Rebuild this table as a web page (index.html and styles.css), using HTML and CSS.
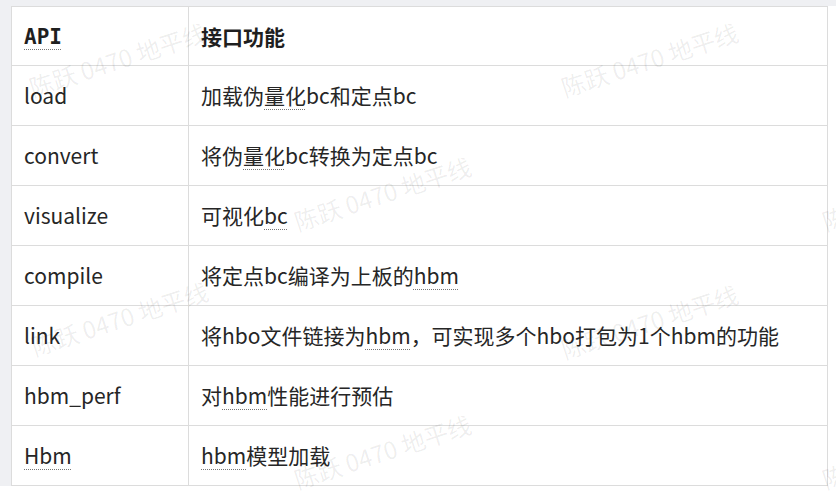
FILE: index.html
```html
<!DOCTYPE html>
<html lang="zh-CN">
<head>
  <meta charset="UTF-8">
  <meta name="viewport" content="width=device-width, initial-scale=1.0">
  <title>API 接口功能</title>
  <link rel="stylesheet" href="styles.css">
</head>
<body>
  <div class="top-band"></div>
  <div class="page">
    <div class="side-band"></div>
    <table class="api-table">
      <thead>
        <tr>
          <th class="col-api"><span class="mark mono">API</span></th>
          <th>接口功能</th>
        </tr>
      </thead>
      <tbody>
        <tr>
          <td>load</td>
          <td>加载伪<span class="mark">量化</span>bc和定点bc</td>
        </tr>
        <tr>
          <td>convert</td>
          <td>将伪<span class="mark">量化</span>bc转换为定点bc</td>
        </tr>
        <tr>
          <td>visualize</td>
          <td>可视化<span class="mark">bc</span></td>
        </tr>
        <tr>
          <td>compile</td>
          <td>将定点bc编译为上板的<span class="mark">hbm</span></td>
        </tr>
        <tr>
          <td>link</td>
          <td>将hbo文件链接为<span class="mark">hbm</span>，可实现多个hbo打包为1个hbm的功能</td>
        </tr>
        <tr>
          <td>hbm_perf</td>
          <td>对<span class="mark">hbm</span>性能进行预估</td>
        </tr>
        <tr>
          <td><span class="mark">Hbm</span></td>
          <td><span class="mark">hbm</span>模型加载</td>
        </tr>
      </tbody>
    </table>
  </div>

  <!-- 水印 -->
  <div class="watermarks">
    <span class="wm" style="left: 30px; top: 76px;">陈跃 0470 地平线</span>
    <span class="wm" style="left: 562px; top: 76px;">陈跃 0470 地平线</span>
    <span class="wm" style="left: 295px; top: 210px;">陈跃 0470 地平线</span>
    <span class="wm" style="left: 823px; top: 210px;">陈跃 0470 地平线</span>
    <span class="wm" style="left: 32px; top: 335px;">陈跃 0470 地平线</span>
    <span class="wm" style="left: 562px; top: 338px;">陈跃 0470 地平线</span>
    <span class="wm" style="left: 295px; top: 468px;">陈跃 0470 地平线</span>
    <span class="wm" style="left: 823px; top: 468px;">陈跃 0470 地平线</span>
  </div>
</body>
</html>
```

FILE: styles.css
```css
body {
  margin: 0;
  background-color: #fff;
  font-family: "Noto Sans CJK SC", "Noto Sans", sans-serif;
  color: #262626;
  position: relative;
  height: 501px;
  overflow: hidden;
}

.top-band {
  height: 6px;
  background-color: #eff0f3;
}

.page {
  display: flex;
  align-items: flex-start;
}

.side-band {
  width: 11px;
  height: 480px;
  background-color: #eff0f3;
}

.api-table {
  width: 817px;
  border-collapse: collapse;
  font-size: 21px;
  background-color: #fff;
}

.api-table th,
.api-table td {
  height: 59px;
  padding: 0 12px;
  border: 1px solid #dcdcdc;
  text-align: left;
  font-weight: normal;
  line-height: 1;
}

.api-table thead th {
  height: 58px;
  font-weight: bold;
  color: #1f1f1f;
}

.col-api {
  width: 152px;
}

.mono {
  font-family: "DejaVu Sans Mono", monospace;
}

/* 虚线下划线 */
.mark {
  text-decoration: underline dotted #777;
  text-underline-offset: 5px;
  text-decoration-thickness: 1px;
}

/* 水印 */
.watermarks {
  position: absolute;
  inset: 0;
  pointer-events: none;
}

.wm {
  position: absolute;
  font-size: 24px;
  line-height: 1;
  color: rgba(0, 0, 0, 0.07);
  white-space: nowrap;
  transform: rotate(-18deg);
  transform-origin: left center;
}
```
